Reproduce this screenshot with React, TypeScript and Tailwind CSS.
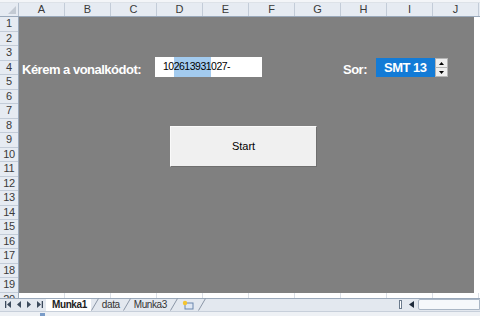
import React from "react";

const cols = ["A", "B", "C", "D", "E", "F", "G", "H", "I", "J"];
const rows = Array.from({ length: 19 }, (_, i) => i + 1);

function Slash() {
  return (
    <svg width="8" height="13" viewBox="0 0 8 13" className="shrink-0">
      <line x1="0.5" y1="12.5" x2="7.5" y2="0.5" stroke="#8a96a6" strokeWidth="1" />
    </svg>
  );
}

function NavArrows() {
  return (
    <div className="flex items-center pl-[5px] w-[46px] text-[#3c4a5c]">
      <svg width="7" height="7" viewBox="0 0 7 7">
        <rect x="0" y="0" width="1.3" height="7" fill="currentColor" />
        <path d="M6 0 L2 3.5 L6 7 Z" fill="currentColor" />
      </svg>
      <svg width="6" height="7" viewBox="0 0 6 7" className="ml-[4px]">
        <path d="M5 0 L1 3.5 L5 7 Z" fill="currentColor" />
      </svg>
      <svg width="6" height="7" viewBox="0 0 6 7" className="ml-[4px]">
        <path d="M1 0 L5 3.5 L1 7 Z" fill="currentColor" />
      </svg>
      <svg width="7" height="7" viewBox="0 0 7 7" className="ml-[4px]">
        <path d="M1 0 L5 3.5 L1 7 Z" fill="currentColor" />
        <rect x="5.7" y="0" width="1.3" height="7" fill="currentColor" />
      </svg>
    </div>
  );
}

export default function App() {
  const font = { fontFamily: '"Liberation Sans", Arial, sans-serif' };
  return (
    <div className="w-[480px] h-[316px] overflow-hidden bg-white flex flex-col text-[#333]" style={font}>
      {/* top strip */}
      <div className="h-[3px] bg-[#f3f5f8] border-b border-[#dde2e8]" />

      {/* column headers */}
      <div className="flex h-[14px] bg-[#e6ebf2] border-b border-[#9aa9bb] shrink-0">
        <div className="w-[19px] border-r border-[#b6c1cf] relative">
          <svg width="8" height="8" viewBox="0 0 8 8" className="absolute right-[2px] bottom-[2px]">
            <path d="M8 0 L8 8 L0 8 Z" fill="#c3cad3" />
          </svg>
        </div>
        {cols.map((c) => (
          <div key={c} className="w-[46px] shrink-0 border-r border-[#c3ccd8] flex items-center justify-center text-[11px] leading-none text-[#3a3a3a]">
            {c}
          </div>
        ))}
      </div>

      {/* sheet body */}
      <div className="flex shrink-0">
        <div className="w-[19px] shrink-0 bg-[#e6ebf2] border-r border-[#9aa9bb]">
          {rows.map((r) => (
            <div key={r} className="h-[14.5px] border-b border-[#c3ccd8] flex items-center justify-center text-[11px] leading-none text-[#3a3a3a] tracking-[-0.3px]">
              {r}
            </div>
          ))}
        </div>

        <div className="w-[455px] bg-[#808080] relative">
          {rows.map((r) => (
            <div key={r} className="h-[14.5px] flex items-end">
              {r === 4 && (
                <>
                  <div className="w-[322px] pl-[3px] mb-[-1px] text-white font-bold text-[13px] tracking-[-0.5px] leading-none whitespace-nowrap">
                    Kérem a vonalkódot:
                  </div>
                  <div className="pl-[2px] mb-[-1px] text-white font-bold text-[13px] tracking-[-0.5px] leading-none">
                    Sor:
                  </div>
                </>
              )}
            </div>
          ))}

          {/* barcode textbox */}
          <div className="absolute left-[136px] top-[40px] w-[107px] h-[20px] bg-white flex items-center pl-[8px] text-[10.5px] tracking-[-0.5px] text-black">
            <span>10</span>
            <span className="bg-[#a3cbef] py-[2px]">2613931</span>
            <span>027-</span>
          </div>

          {/* row combo */}
          <div className="absolute left-[357px] top-[41px] h-[19px] flex">
            <div className="w-[59px] bg-[#137bd6] text-white font-bold text-[13px] tracking-[-0.5px] flex items-center pl-[8px]">
              SMT 13
            </div>
            <div className="w-[13px] flex flex-col bg-white border border-[#b5b5b5]">
              <div className="flex-1 bg-[#eeeeee] border-b border-[#b5b5b5] flex items-center justify-center">
                <svg width="5" height="3" viewBox="0 0 5 3"><path d="M0 3 L2.5 0 L5 3 Z" fill="#000" /></svg>
              </div>
              <div className="flex-1 bg-[#eeeeee] flex items-center justify-center">
                <svg width="5" height="3" viewBox="0 0 5 3"><path d="M0 0 L2.5 3 L5 0 Z" fill="#000" /></svg>
              </div>
            </div>
          </div>

          {/* start button */}
          <button className="absolute left-[151px] top-[109px] w-[147px] h-[41px] bg-[#f0f0f0] border border-t-[#fafafa] border-l-[#fafafa] border-r-[#6f6f6f] border-b-[#6f6f6f] text-[11px] text-black flex items-center justify-center">
            Start
          </button>
        </div>

        <div className="flex-1 bg-white" />
      </div>

      {/* row 20, partially visible */}
      <div className="flex h-[5px] overflow-hidden shrink-0">
        <div className="w-[19px] shrink-0 bg-[#e6ebf2] border-r border-[#9aa9bb] text-[11px] leading-none flex justify-center pt-[1px] text-[#3a3a3a] tracking-[-0.3px]">
          20
        </div>
        {cols.map((c) => (
          <div key={c} className="w-[46px] shrink-0 border-r border-[#dadfe6]" />
        ))}
      </div>

      {/* sheet tabs bar */}
      <div className="flex items-center h-[13px] bg-[#e3e8ef] border-t border-[#9aa9bb] shrink-0 text-[10px] tracking-[-0.4px] leading-none">
        <NavArrows />
        <div className="flex items-end h-full">
          <div className="h-full bg-white pl-[6px] pr-[4px] flex items-center font-bold text-[#222]">Munka1</div>
          <Slash />
          <div className="h-full px-[3px] flex items-center text-[#333]">data</div>
          <Slash />
          <div className="h-full px-[3px] flex items-center text-[#333]">Munka3</div>
          <Slash />
          <div className="h-full px-[4px] flex items-center">
            <svg width="12" height="10" viewBox="0 0 12 10">
              <rect x="3" y="3" width="8" height="6" fill="#dfe7f3" stroke="#6a86ad" strokeWidth="1" />
              <circle cx="3" cy="3" r="2.2" fill="#f4c430" />
            </svg>
          </div>
          <Slash />
        </div>
        <div className="flex-1" />
        <div className="flex items-center h-full">
          <div className="w-[3px] h-[9px] border border-[#6b7a8c] bg-white mr-[7px]" />
          <svg width="5" height="7" viewBox="0 0 5 7" className="mr-[4px]">
            <path d="M5 0 L0 3.5 L5 7 Z" fill="#1d2a3a" />
          </svg>
          <div className="w-[62px] h-[11px] bg-[#f6f8fb] border border-[#aab6c5] rounded-l-[2px]" />
        </div>
      </div>

      {/* status strip */}
      <div className="flex-1 bg-[#eef1f5] border-t border-[#c7cfda] relative">
        <div className="absolute left-[40px] top-[1px] w-[5px] h-[4px] bg-[#7a9cc8]" />
      </div>
    </div>
  );
}
